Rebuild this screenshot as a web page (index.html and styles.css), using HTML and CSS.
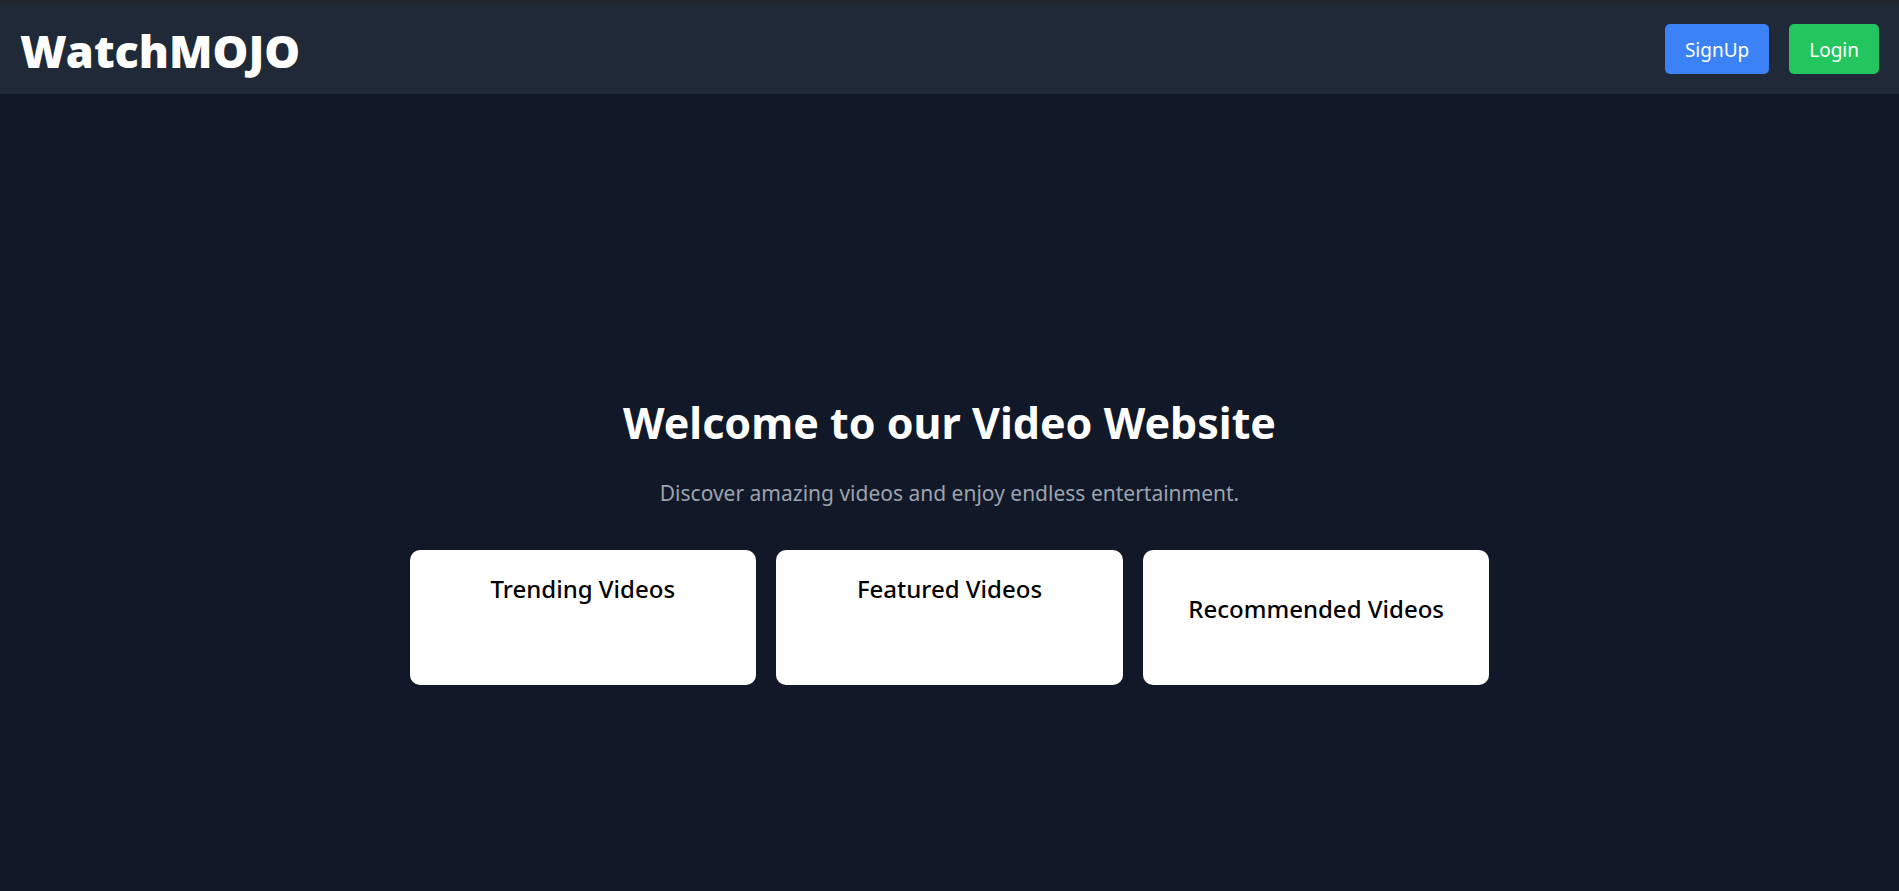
FILE: index.html
```html
<!DOCTYPE html>
<html lang="en">
<head>
<meta charset="utf-8">
<meta name="viewport" content="width=device-width, initial-scale=1">
<title>WatchMOJO</title>
<link rel="stylesheet" href="styles.css">
</head>
<body>
<header class="navbar">
  <div class="brand">WatchMOJO</div>
  <nav class="actions">
    <button type="button" class="btn btn-signup">SignUp</button>
    <button type="button" class="btn btn-login">Login</button>
  </nav>
</header>
<main class="hero">
  <h1 class="title">Welcome to our Video Website</h1>
  <p class="lead">Discover amazing videos and enjoy endless entertainment.</p>
  <div class="cards">
    <section class="card"><h2 class="card-title">Trending Videos</h2></section>
    <section class="card"><h2 class="card-title">Featured Videos</h2></section>
    <section class="card card-tall"><h2 class="card-title">Recommended Videos</h2></section>
  </div>
</main>
</body>
</html>
```
FILE: styles.css
```css
* {
  box-sizing: border-box;
  margin: 0;
}

body {
  min-height: 100vh;
  display: flex;
  flex-direction: column;
  border-top: 4px solid #23272e;
  background: #111827;
  color: #fff;
  font-family: "Segoe UI", "Noto Sans", "Open Sans", sans-serif;
}

.navbar {
  display: flex;
  align-items: center;
  justify-content: space-between;
  padding: 20px;
  background: #1f2937;
}

.brand {
  padding-top: 4px;
  font-size: 45px;
  line-height: 46px;
  font-weight: 900;
}

.actions {
  display: flex;
  gap: 20px;
}

.btn {
  padding: 11px 20px 9px;
  border: 0;
  border-radius: 5px;
  color: #fff;
  font-family: inherit;
  font-size: 19px;
  line-height: 30px;
  cursor: pointer;
}

.btn-signup {
  background: #3b82f6;
}

.btn-login {
  background: #22c55e;
}

.hero {
  flex: 1;
  display: flex;
  flex-direction: column;
  align-items: center;
  justify-content: center;
  padding: 114px 20px 20px;
  text-align: center;
}

.title {
  margin-bottom: 24px;
  font-size: 43px;
  line-height: 56px;
  font-weight: 700;
}

.lead {
  margin-bottom: 39px;
  color: #9ca3af;
  font-size: 21px;
  line-height: 36px;
}

.cards {
  display: grid;
  grid-template-columns: repeat(3, 1fr);
  gap: 20px;
  width: 100%;
  max-width: 1080px;
}

.card {
  padding: 21px 20px 19px;
  border-radius: 10px;
  background: #fff;
  color: #000;
}

.card-tall {
  padding: 41px 20px 59px;
}

.card-title {
  font-size: 24px;
  line-height: 35px;
  font-weight: 500;
}
```
